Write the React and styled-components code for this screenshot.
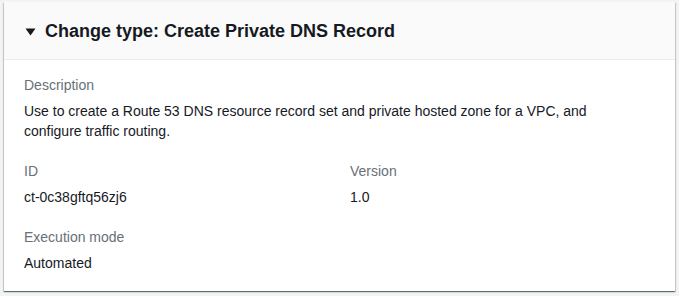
import React from "react";
import styled, { createGlobalStyle } from "styled-components";

const Global = createGlobalStyle`
  html, body { margin: 0; padding: 0; background: #f2f3f3; }
  body { font-family: "Liberation Sans", Arial, sans-serif; color: #16191f; }
`;

const Page = styled.div`
  padding: 2px 4px 4px 4px;
`;

const Card = styled.section`
  background: #ffffff;
  box-shadow: 0 1px 1px 0 rgba(0, 28, 36, 0.5), 1px 1px 1px 0 rgba(0, 28, 36, 0.12),
    -1px 1px 1px 0 rgba(0, 28, 36, 0.12);
`;

const Header = styled.div`
  display: flex;
  align-items: center;
  gap: 9px;
  height: 57px;
  padding: 1px 20px 0 21px;
  box-sizing: border-box;
  height: 58px;
  background: #fafafa;
  border-bottom: 1px solid #eaeded;
`;

const Caret = styled.svg`
  width: 11px;
  height: 8px;
  flex: none;
  margin-top: 1px;
`;

const Title = styled.h2`
  margin: 0;
  font-size: 18px;
  font-weight: 700;
  line-height: 22px;
  color: #16191f;
`;

const Body = styled.div`
  padding: 15px 20px 18px 20px;
  display: flex;
  flex-direction: column;
  gap: 20px;
`;

const Row = styled.div`
  display: grid;
  grid-template-columns: ${(p) => (p.$cols === 2 ? "326px 1fr" : "1fr")};
`;

const Field = styled.div`
  display: flex;
  flex-direction: column;
  gap: 6px;
`;

const Label = styled.div`
  font-size: 14px;
  line-height: 20px;
  color: #687078;
`;

const Value = styled.div`
  font-size: 14px;
  line-height: 20px;
  color: #16191f;
`;

export default function App() {
  return (
    <>
      <Global />
      <Page>
        <Card>
          <Header>
            <Caret viewBox="0 0 11 8">
              <path d="M0.5 0.5 H10.5 L5.5 7.5 Z" fill="#16191f" />
            </Caret>
            <Title>Change type: Create Private DNS Record</Title>
          </Header>
          <Body>
            <Row>
              <Field>
                <Label>Description</Label>
                <Value>
                  Use to create a Route 53 DNS resource record set and private hosted zone for a VPC, and
                  <br />
                  configure traffic routing.
                </Value>
              </Field>
            </Row>
            <Row $cols={2}>
              <Field>
                <Label>ID</Label>
                <Value>ct-0c38gftq56zj6</Value>
              </Field>
              <Field>
                <Label>Version</Label>
                <Value>1.0</Value>
              </Field>
            </Row>
            <Row>
              <Field>
                <Label>Execution mode</Label>
                <Value>Automated</Value>
              </Field>
            </Row>
          </Body>
        </Card>
      </Page>
    </>
  );
}
